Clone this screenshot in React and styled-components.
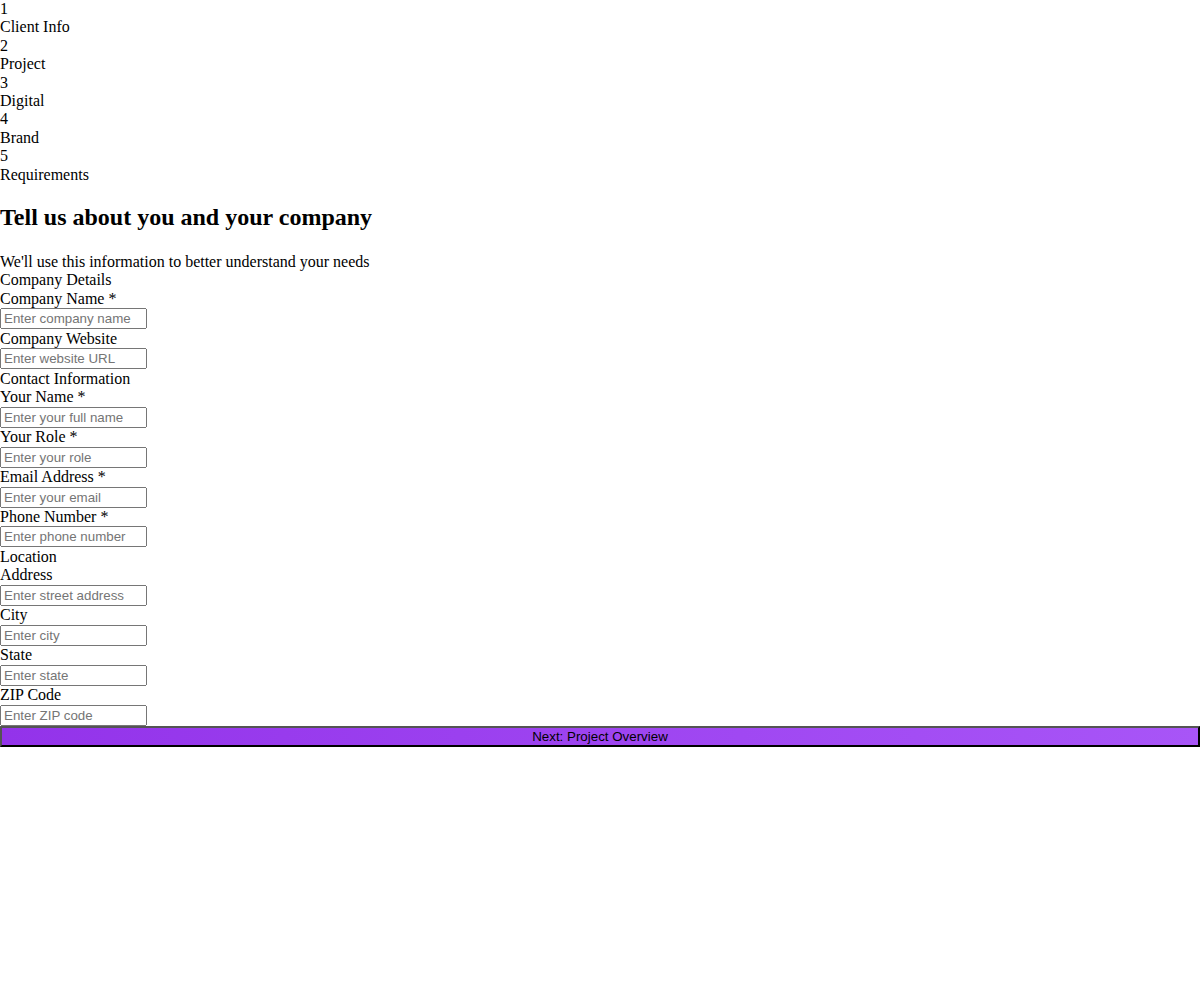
import React from "react";
import styled, { createGlobalStyle } from "styled-components";

const Global = createGlobalStyle`
  html, body {
    margin: 0;
    padding: 0;
    background: #ffffff;
    color: #000000;
    font-family: "Liberation Serif", "Times New Roman", serif;
    font-size: 16px;
    line-height: 1.15;
  }
`;

const Page = styled.div`
  display: block;
`;

const Steps = styled.div`
  display: block;
`;

const Step = styled.div`
  display: block;
`;

const StepNumber = styled.div``;
const StepLabel = styled.div``;

const Title = styled.h2`
  font-size: 1.5em;
  font-weight: bold;
  margin: 20.5px 0 21px;
`;

const Subtitle = styled.div``;

const Form = styled.form`
  display: block;
`;

const Section = styled.div``;
const SectionTitle = styled.div``;
const Field = styled.div``;
const Label = styled.label`
  display: block;
`;

const Input = styled.input`
  display: block;
  width: 147px;
  box-sizing: border-box;
  height: 21px;
  margin: 0 0 0.6px;
  font-family: "Liberation Sans", Arial, sans-serif;
  font-size: 13.333px;
`;

const NextButton = styled.button`
  display: block;
  width: 100%;
  height: 21px;
  margin-top: 0.6px;
  font-family: "Liberation Sans", Arial, sans-serif;
  font-size: 13.333px;
  background: linear-gradient(to right, #9333ea, #a855f7);
  color: #000000;
`;

const steps = ["Client Info", "Project", "Digital", "Brand", "Requirements"];

const sections = [
  {
    title: "Company Details",
    fields: [
      ["Company Name *", "Enter company name"],
      ["Company Website", "Enter website URL"],
    ],
  },
  {
    title: "Contact Information",
    fields: [
      ["Your Name *", "Enter your full name"],
      ["Your Role *", "Enter your role"],
      ["Email Address *", "Enter your email"],
      ["Phone Number *", "Enter phone number"],
    ],
  },
  {
    title: "Location",
    fields: [
      ["Address", "Enter street address"],
      ["City", "Enter city"],
      ["State", "Enter state"],
      ["ZIP Code", "Enter ZIP code"],
    ],
  },
];

export default function App() {
  return (
    <Page>
      <Global />
      <Steps>
        {steps.map((s, i) => (
          <Step key={s}>
            <StepNumber>{i + 1}</StepNumber>
            <StepLabel>{s}</StepLabel>
          </Step>
        ))}
      </Steps>
      <Title>Tell us about you and your company</Title>
      <Subtitle>We'll use this information to better understand your needs</Subtitle>
      <Form onSubmit={(e) => e.preventDefault()}>
        {sections.map((sec) => (
          <Section key={sec.title}>
            <SectionTitle>{sec.title}</SectionTitle>
            {sec.fields.map(([label, ph]) => (
              <Field key={label}>
                <Label>{label}</Label>
                <Input type="text" placeholder={ph} />
              </Field>
            ))}
          </Section>
        ))}
        <NextButton type="button">Next: Project Overview</NextButton>
      </Form>
    </Page>
  );
}
